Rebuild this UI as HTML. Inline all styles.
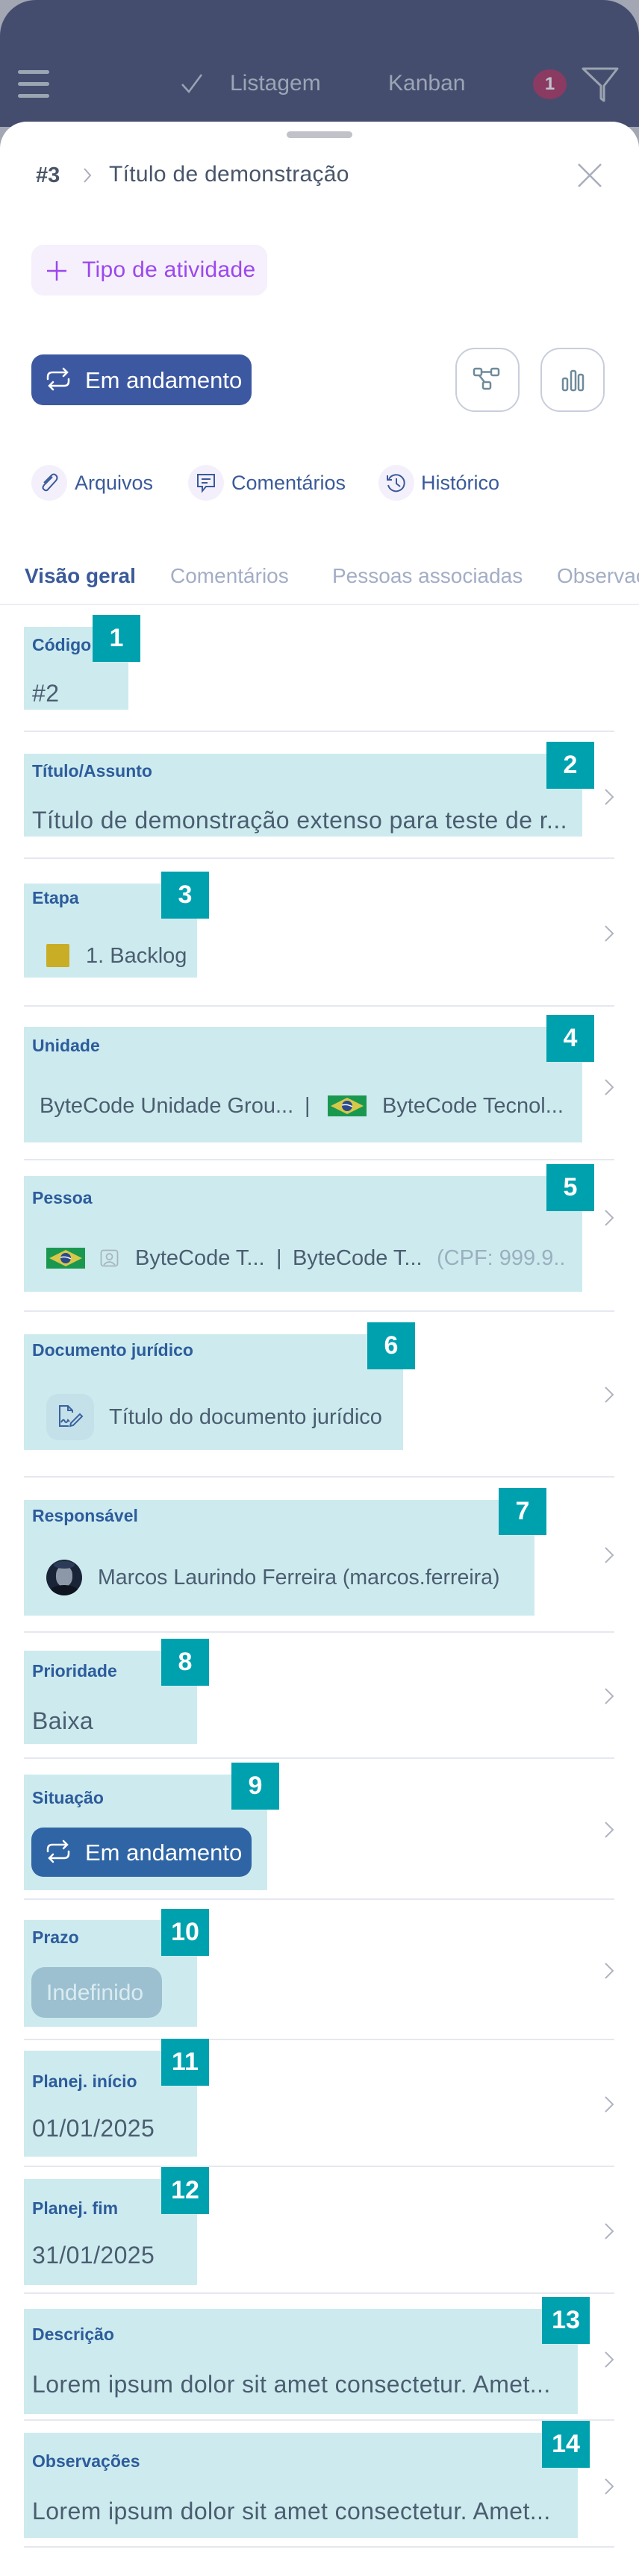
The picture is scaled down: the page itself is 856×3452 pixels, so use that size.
<!DOCTYPE html>
<html><head><meta charset="utf-8">
<style>
*{margin:0;padding:0;box-sizing:border-box}
html,body{width:856px;height:3452px;overflow:hidden;background:#fff}
body{font-family:"Liberation Sans",sans-serif;position:relative}
.a{position:absolute}
.t{position:absolute;white-space:nowrap;line-height:1}
.hl{position:absolute;background:#cdebee;left:32px}
.bd{position:absolute;background:#00a1af;color:#fff;font-weight:bold;font-size:34px;width:64px;height:63px;display:flex;align-items:center;justify-content:center}
.lb{position:absolute;left:43px;font-size:23px;font-weight:bold;color:#2d5c9c;white-space:nowrap;line-height:1}
.v{position:absolute;font-size:32px;letter-spacing:0.4px;color:#4b5d70;white-space:nowrap;line-height:1}
.s{font-size:29px;letter-spacing:0}
.dv{position:absolute;left:32px;width:791px;height:2px;background:#e6e8f0}
.ch{position:absolute;left:808px;width:16px;height:24px}
</style></head><body>
<!-- header -->
<div class="a" style="left:0;top:0;width:856px;height:200px;background:#a3a7b3"></div>
<div class="a" style="left:0;top:0;width:856px;height:170px;background:#454d6f;border-radius:48px 48px 0 0"></div>
<div class="a" style="left:24px;top:94px;width:42px;height:5px;background:#9aa6b2;border-radius:3px"></div>
<div class="a" style="left:24px;top:110px;width:42px;height:5px;background:#9aa6b2;border-radius:3px"></div>
<div class="a" style="left:24px;top:126px;width:42px;height:5px;background:#9aa6b2;border-radius:3px"></div>
<svg class="a" style="left:242px;top:98px" width="30" height="28"><path d="M2 15 L11 25 L28 2" fill="none" stroke="#9aa4b4" stroke-width="2.5"/></svg>
<div class="t" style="left:308px;top:97px;font-size:30px;color:#9ba5b5">Listagem</div>
<div class="t" style="left:520px;top:97px;font-size:30px;color:#9ba5b5">Kanban</div>
<div class="a" style="left:714px;top:93px;width:45px;height:40px;border-radius:50%;background:#8b3a62;color:#c0c4cc;font-weight:bold;font-size:24px;text-align:center;line-height:40px">1</div>
<svg class="a" style="left:779px;top:90px" width="50" height="48"><path d="M2 2 H48 L30 25 V45 L26 42 V25 Z" fill="none" stroke="#9aa4b0" stroke-width="3" stroke-linejoin="round"/></svg>
<!-- sheet -->
<div class="a" style="left:0;top:163px;width:856px;height:3289px;background:#fff;border-radius:36px 36px 40px 40px"></div>
<div class="a" style="left:384px;top:176px;width:88px;height:9px;background:#c0c2c8;border-radius:5px"></div>
<div class="t" style="left:48px;top:221px;font-size:29px;font-weight:bold;color:#4a5568">#3</div>
<svg class="a" style="left:110px;top:224px" width="14" height="22"><path d="M3 2 L11 11 L3 20" fill="none" stroke="#a9aebc" stroke-width="2"/></svg>
<div class="t" style="left:146px;top:219px;font-size:30px;letter-spacing:0.3px;color:#48556a">Título de demonstração</div>
<svg class="a" style="left:773px;top:218px" width="34" height="34"><path d="M2 2 L32 32 M32 2 L2 32" stroke="#a9aebc" stroke-width="2.5"/></svg>
<!-- tipo -->
<div class="a" style="left:42px;top:328px;width:316px;height:68px;border-radius:16px;background:#f6f0fd"></div>
<svg class="a" style="left:62px;top:349px" width="28" height="28"><path d="M14 1 V27 M1 14 H27" stroke="#9b48ec" stroke-width="2.5"/></svg>
<div class="t" style="left:110px;top:347px;font-size:30px;letter-spacing:0.3px;color:#9b48ec">Tipo de atividade</div>
<!-- em andamento -->
<div class="a" style="left:42px;top:475px;width:295px;height:68px;border-radius:16px;background:#3c58a1"></div>
<svg class="a" style="left:60px;top:490px" width="36" height="36" viewBox="0 0 36 36" fill="none" stroke="#fff" stroke-width="2.5" stroke-linecap="round"><path d="M4 18 V15 Q4 9 10 9 H30 M25 4 L30 9 L25 14 M32 18 V21 Q32 27 26 27 H6 M11 32 L6 27 L11 22"/></svg>
<div class="t" style="left:114px;top:494px;font-size:31px;color:#fff">Em andamento</div>
<div class="a" style="left:610px;top:466px;width:86px;height:86px;border:2px solid #c9cddc;border-radius:26px"></div>
<svg class="a" style="left:633px;top:492px" width="40" height="36" fill="none" stroke="#6f8a9a" stroke-width="2.5"><rect x="2" y="2" width="10" height="9" rx="2"/><rect x="25" y="2" width="10" height="9" rx="2"/><rect x="14" y="20" width="10" height="9" rx="2"/><path d="M12 6.5 H25 M9 11 L16 20"/></svg>
<div class="a" style="left:724px;top:466px;width:86px;height:86px;border:2px solid #c9cddc;border-radius:26px"></div>
<svg class="a" style="left:752px;top:494px" width="32" height="32" fill="none" stroke="#6f8a9a" stroke-width="2.5"><rect x="2" y="13" width="6" height="16" rx="2"/><rect x="13" y="3" width="6" height="26" rx="2"/><rect x="23" y="8" width="6" height="21" rx="2"/></svg>
<!-- links -->
<div class="a" style="left:42px;top:623px;width:48px;height:48px;border-radius:50%;background:#f4f0fb"></div>
<svg class="a" style="left:52px;top:633px" width="28" height="28" fill="none" stroke="#3a5a9a" stroke-width="2"><path d="M18 6 L7 17 Q4 21 7 23 Q10 26 13 22 L23 11 Q26 7 23 4 Q20 1 17 4 L7 14"/></svg>
<div class="t" style="left:100px;top:634px;font-size:27px;color:#3a5a9a">Arquivos</div>
<div class="a" style="left:252px;top:623px;width:48px;height:48px;border-radius:50%;background:#f4f0fb"></div>
<svg class="a" style="left:262px;top:633px" width="28" height="28" fill="none" stroke="#3a5a9a" stroke-width="2"><path d="M3 3 H25 V19 H14 L9 25 V19 H3 Z M8 9 H20 M8 14 H16"/></svg>
<div class="t" style="left:310px;top:634px;font-size:27px;color:#3a5a9a">Comentários</div>
<div class="a" style="left:507px;top:623px;width:48px;height:48px;border-radius:50%;background:#f4f0fb"></div>
<svg class="a" style="left:516px;top:633px" width="30" height="28" fill="none" stroke="#3a5a9a" stroke-width="2"><path d="M5 9 A11 11 0 1 1 4 17 M3 4 V10 H9 M15 8 V15 L20 19"/></svg>
<div class="t" style="left:564px;top:634px;font-size:27px;color:#3a5a9a">Histórico</div>
<!-- tabs -->
<div class="a" style="left:0;top:750px;width:856px;height:45px;overflow:hidden">
<div class="t" style="left:33px;top:8px;font-size:28px;color:#3a5a9a;font-weight:bold">Visão geral</div>
<div class="t" style="left:228px;top:8px;font-size:28px;color:#a3adc6">Comentários</div>
<div class="t" style="left:445px;top:8px;font-size:28px;color:#a3adc6">Pessoas associadas</div>
<div class="t" style="left:746px;top:8px;font-size:28px;color:#a3adc6">Observações</div>
</div>
<div class="a" style="left:0;top:809px;width:856px;height:2px;background:#eceef4"></div>

<!-- row1 -->
<div class="hl" style="top:840px;width:140px;height:111px"></div>
<div class="lb" style="top:853px">Código</div>
<div class="bd" style="left:124px;top:824px">1</div>
<div class="v" style="left:43px;top:913px">#2</div>
<div class="dv" style="top:979px"></div>
<!-- row2 -->
<div class="hl" style="top:1010px;width:748px;height:111px"></div>
<div class="lb" style="top:1022px">Título/Assunto</div>
<div class="bd" style="left:732px;top:994px">2</div>
<div class="v" style="left:43px;top:1083px">Título de demonstração extenso para teste de r...</div>
<svg class="ch" style="top:1056px"><path d="M3 2 L13 12 L3 22" fill="none" stroke="#b0b4c0" stroke-width="2"/></svg>
<div class="dv" style="top:1149px"></div>
<!-- row3 -->
<div class="hl" style="top:1184px;width:232px;height:126px"></div>
<div class="lb" style="top:1192px">Etapa</div>
<div class="bd" style="left:216px;top:1168px">3</div>
<div class="a" style="left:62px;top:1265px;width:31px;height:31px;background:#c9ad25;border-radius:2px"></div>
<div class="v s" style="left:115px;top:1267px">1. Backlog</div>
<svg class="ch" style="top:1239px"><path d="M3 2 L13 12 L3 22" fill="none" stroke="#b0b4c0" stroke-width="2"/></svg>
<div class="dv" style="top:1347px"></div>
<!-- row4 -->
<div class="hl" style="top:1376px;width:748px;height:155px"></div>
<div class="lb" style="top:1390px">Unidade</div>
<div class="bd" style="left:732px;top:1360px">4</div>
<div class="v s" style="left:53px;top:1468px">ByteCode Unidade Grou...</div>
<div class="v s" style="left:408px;top:1468px">|</div>
<svg class="a" style="left:439px;top:1468px" width="52" height="28"><rect width="52" height="28" fill="#1a9850"/><path d="M26 3 L48 14 L26 25 L4 14Z" fill="#d8c84a"/><circle cx="26" cy="14" r="7" fill="#2a4a8a"/><path d="M19 13 Q26 11 33 15" stroke="#fff" stroke-width="1.5" fill="none"/></svg>
<div class="v s" style="left:512px;top:1468px">ByteCode Tecnol...</div>
<svg class="ch" style="top:1445px"><path d="M3 2 L13 12 L3 22" fill="none" stroke="#b0b4c0" stroke-width="2"/></svg>
<div class="dv" style="top:1553px"></div>
<!-- row5 -->
<div class="hl" style="top:1576px;width:748px;height:155px"></div>
<div class="lb" style="top:1594px">Pessoa</div>
<div class="bd" style="left:732px;top:1560px">5</div>
<svg class="a" style="left:62px;top:1672px" width="52" height="28"><rect width="52" height="28" fill="#1a9850"/><path d="M26 3 L48 14 L26 25 L4 14Z" fill="#d8c84a"/><circle cx="26" cy="14" r="7" fill="#2a4a8a"/><path d="M19 13 Q26 11 33 15" stroke="#fff" stroke-width="1.5" fill="none"/></svg>
<svg class="a" style="left:134px;top:1674px" width="25" height="24" fill="none" stroke="#a8b4c0" stroke-width="1.8"><rect x="1.5" y="1.5" width="22" height="21" rx="3"/><circle cx="12.5" cy="10" r="4"/><path d="M5 21 Q12.5 13 20 21"/></svg>
<div class="v s" style="left:181px;top:1672px">ByteCode T...</div>
<div class="v s" style="left:370px;top:1672px">|</div>
<div class="v s" style="left:392px;top:1672px">ByteCode T...</div>
<div class="a" style="left:585px;top:1660px;width:175px;height:45px;overflow:hidden"><div class="v s" style="left:0;top:12px;color:#9aafbf">(CPF: 999.9...</div></div>
<svg class="ch" style="top:1620px"><path d="M3 2 L13 12 L3 22" fill="none" stroke="#b0b4c0" stroke-width="2"/></svg>
<div class="dv" style="top:1756px"></div>
<!-- row6 -->
<div class="hl" style="top:1788px;width:508px;height:155px"></div>
<div class="lb" style="top:1798px">Documento jurídico</div>
<div class="bd" style="left:492px;top:1772px">6</div>
<div class="a" style="left:62px;top:1868px;width:64px;height:62px;border-radius:16px;background:#c4e1e9"></div>
<svg class="a" style="left:76px;top:1880px" width="36" height="36" fill="none" stroke="#3a62a0" stroke-width="2"><path d="M16 31 H4 V4 H15 L21 10 V13 M15 4 V10 H21 M6 26 Q9 20 11 25 Q13 28 15 23 L17 25 M19 27 L31 15 L34 18 L22 30 L18 31 Z"/></svg>
<div class="v s" style="left:146px;top:1885px">Título do documento jurídico</div>
<svg class="ch" style="top:1857px"><path d="M3 2 L13 12 L3 22" fill="none" stroke="#b0b4c0" stroke-width="2"/></svg>
<div class="dv" style="top:1978px"></div>
<!-- row7 -->
<div class="hl" style="top:2010px;width:684px;height:155px"></div>
<div class="lb" style="top:2020px">Responsável</div>
<div class="bd" style="left:668px;top:1994px">7</div>
<div class="a" style="left:62px;top:2090px;width:48px;height:48px;border-radius:50%;background:#1a2438;overflow:hidden">
<div class="a" style="left:13px;top:8px;width:22px;height:28px;border-radius:45%;background:#8c98a8"></div>
<div class="a" style="left:4px;top:34px;width:40px;height:20px;border-radius:50%;background:#0e1520"></div>
<div class="a" style="left:10px;top:2px;width:28px;height:10px;border-radius:50%;background:#2c3c58"></div>
</div>
<div class="v s" style="left:131px;top:2100px;font-size:28.5px">Marcos Laurindo Ferreira (marcos.ferreira)</div>
<svg class="ch" style="top:2072px"><path d="M3 2 L13 12 L3 22" fill="none" stroke="#b0b4c0" stroke-width="2"/></svg>
<div class="dv" style="top:2186px"></div>
<!-- row8 -->
<div class="hl" style="top:2212px;width:232px;height:125px"></div>
<div class="lb" style="top:2228px">Prioridade</div>
<div class="bd" style="left:216px;top:2196px">8</div>
<div class="v" style="left:43px;top:2290px">Baixa</div>
<svg class="ch" style="top:2261px"><path d="M3 2 L13 12 L3 22" fill="none" stroke="#b0b4c0" stroke-width="2"/></svg>
<div class="dv" style="top:2355px"></div>
<!-- row9 -->
<div class="hl" style="top:2378px;width:326px;height:155px"></div>
<div class="lb" style="top:2398px">Situação</div>
<div class="bd" style="left:310px;top:2362px">9</div>
<div class="a" style="left:42px;top:2449px;width:295px;height:66px;border-radius:16px;background:#2f64a5"></div>
<svg class="a" style="left:60px;top:2463px" width="36" height="36" viewBox="0 0 36 36" fill="none" stroke="#fff" stroke-width="2.5" stroke-linecap="round"><path d="M4 18 V15 Q4 9 10 9 H30 M25 4 L30 9 L25 14 M32 18 V21 Q32 27 26 27 H6 M11 32 L6 27 L11 22"/></svg>
<div class="t" style="left:114px;top:2467px;font-size:31px;color:#fff">Em andamento</div>
<svg class="ch" style="top:2440px"><path d="M3 2 L13 12 L3 22" fill="none" stroke="#b0b4c0" stroke-width="2"/></svg>
<div class="dv" style="top:2544px"></div>
<!-- row10 -->
<div class="hl" style="top:2573px;width:232px;height:143px"></div>
<div class="lb" style="top:2585px">Prazo</div>
<div class="bd" style="left:216px;top:2558px">10</div>
<div class="a" style="left:42px;top:2636px;width:175px;height:68px;border-radius:18px;background:#9dc0d0"></div>
<div class="t" style="left:62px;top:2656px;font-size:30px;color:#d9ecf2">Indefinido</div>
<svg class="ch" style="top:2629px"><path d="M3 2 L13 12 L3 22" fill="none" stroke="#b0b4c0" stroke-width="2"/></svg>
<div class="dv" style="top:2732px"></div>
<!-- row11 -->
<div class="hl" style="top:2748px;width:232px;height:142px"></div>
<div class="lb" style="top:2778px">Planej. início</div>
<div class="bd" style="left:216px;top:2732px">11</div>
<div class="v" style="left:43px;top:2836px">01/01/2025</div>
<svg class="ch" style="top:2808px"><path d="M3 2 L13 12 L3 22" fill="none" stroke="#b0b4c0" stroke-width="2"/></svg>
<div class="dv" style="top:2902px"></div>
<!-- row12 -->
<div class="hl" style="top:2920px;width:232px;height:142px"></div>
<div class="lb" style="top:2948px">Planej. fim</div>
<div class="bd" style="left:216px;top:2904px">12</div>
<div class="v" style="left:43px;top:3006px">31/01/2025</div>
<svg class="ch" style="top:2978px"><path d="M3 2 L13 12 L3 22" fill="none" stroke="#b0b4c0" stroke-width="2"/></svg>
<div class="dv" style="top:3072px"></div>
<!-- row13 -->
<div class="hl" style="top:3094px;width:742px;height:141px"></div>
<div class="lb" style="top:3117px">Descrição</div>
<div class="bd" style="left:726px;top:3078px">13</div>
<div class="v" style="left:43px;top:3179px">Lorem ipsum dolor sit amet consectetur. Amet...</div>
<svg class="ch" style="top:3150px"><path d="M3 2 L13 12 L3 22" fill="none" stroke="#b0b4c0" stroke-width="2"/></svg>
<div class="dv" style="top:3242px"></div>
<!-- row14 -->
<div class="hl" style="top:3260px;width:742px;height:141px"></div>
<div class="lb" style="top:3287px">Observações</div>
<div class="bd" style="left:726px;top:3244px">14</div>
<div class="v" style="left:43px;top:3349px">Lorem ipsum dolor sit amet consectetur. Amet...</div>
<svg class="ch" style="top:3320px"><path d="M3 2 L13 12 L3 22" fill="none" stroke="#b0b4c0" stroke-width="2"/></svg>
<div class="dv" style="top:3412px"></div>
</body></html>
